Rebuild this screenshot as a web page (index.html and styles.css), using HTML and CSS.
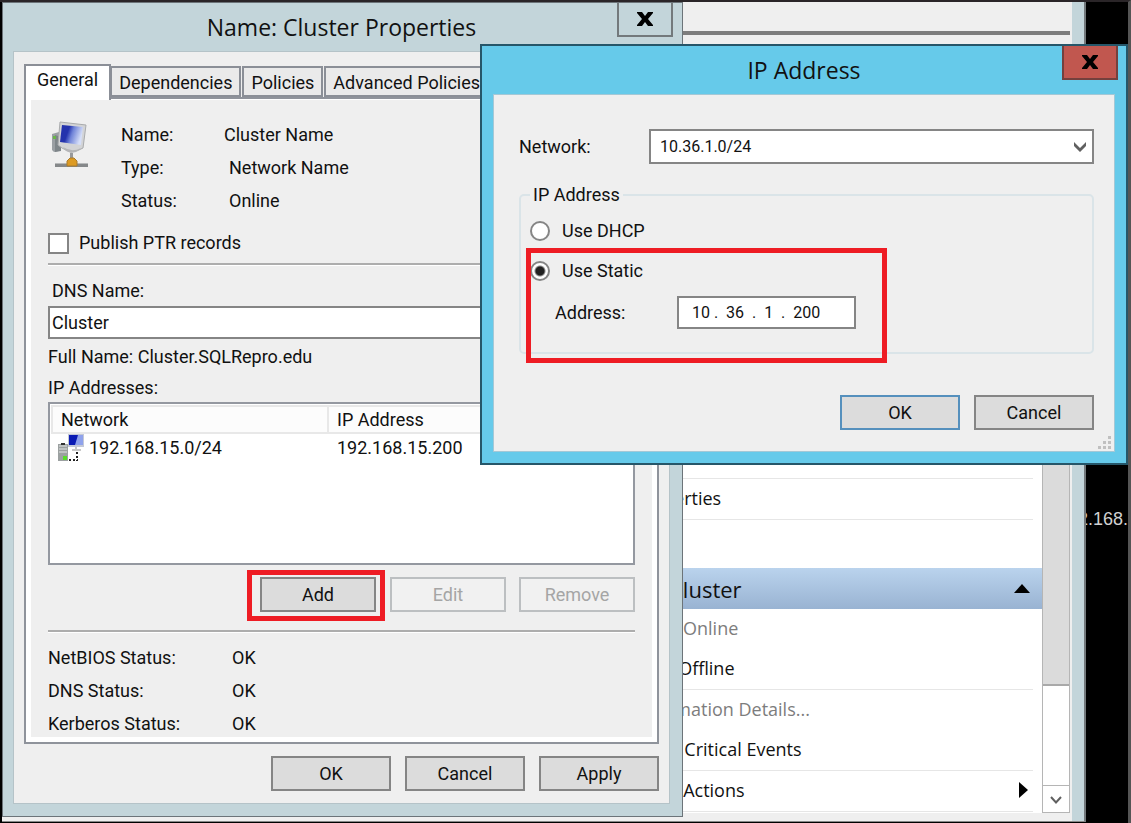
FILE: index.html
```html
<!DOCTYPE html>
<html lang="en">
<head>
    <meta charset="UTF-8">
    <meta name="viewport" content="width=device-width, initial-scale=1.0">
    <title>Name: Cluster Properties</title>
    <link rel="stylesheet" href="styles.css">
</head>
<body>
    <div class="desktop">
        <p class="console">192.168.</p>

        <!-- Failover Cluster Manager, behind the dialogs -->
        <div class="manager">
            <div class="toolbar"></div>
            <div class="pane">
                <div class="actions">
                    <a class="action line-top line" href="#">Properties</a>
                    <div class="actions-header">
                        <span>Cluster</span>
                        <svg width="16" height="9" viewBox="0 0 16 9"><path d="M0 9L8 0L16 9Z"/></svg>
                    </div>
                    <a class="action off" href="#">Bring Online</a>
                    <a class="action line" href="#">Take Offline</a>
                    <a class="action off" href="#">Information Details...</a>
                    <a class="action line" href="#">Show Critical Events</a>
                    <a class="action line" href="#">More Actions
                        <svg width="9" height="16" viewBox="0 0 9 16"><path d="M0 0L9 8L0 16Z"/></svg>
                    </a>
                </div>
                <div class="scrollbar">
                    <div class="thumb"></div>
                    <button class="scroll-down" aria-label="Scroll down">
                        <svg width="14" height="10" viewBox="0 0 14 10"><path d="M2 2L7 7.500L12 2" fill="none" stroke="#606060" stroke-width="2"/></svg>
                    </button>
                </div>
            </div>
        </div>

        <!-- Cluster properties window -->
        <div class="window properties">
            <div class="titlebar">
                <h1>Name: Cluster Properties</h1>
                <button class="close" aria-label="Close">
                    <svg width="16" height="14" viewBox="0 0 16 14"><path d="M0 0H5L8 4L11 0H16V1L11 7L16 13V14H11L8 10L5 14H0V13L5 7L0 1Z"/></svg>
                </button>
            </div>
            <div class="client">
                <div class="tabs">
                    <button class="tab active">General</button>
                    <button class="tab">Dependencies</button>
                    <button class="tab">Policies</button>
                    <button class="tab">Advanced Policies</button>
                </div>
                <div class="tab-panel">
                    <div class="summary">
                        <svg class="resource-icon" width="44" height="52" viewBox="0 0 44 52">
                            <defs>
                                <linearGradient id="screen" x1="0" y1="0" x2="1" y2="0.3">
                                    <stop offset="0.4" stop-color="#2433ad"/>
                                    <stop offset="0.6" stop-color="#6f83d8"/>
                                    <stop offset="1" stop-color="#d5def8"/>
                                </linearGradient>
                            </defs>
                            <path d="M4 14L11 12V31L6 32L4 30Z" fill="#9a9fa3"/>
                            <path d="M7 15L13 17V31L7 32Z" fill="#7e8589"/>
                            <rect x="5" y="16" width="3" height="3" fill="#69b54a"/>
                            <path d="M12 2L38 5L35 28Q24 35 14 28L10 25Z" fill="#d3d4d6" stroke="#a9abad"/>
                            <path d="M14 5L35 7L33 25L12 22Z" fill="url(#screen)"/>
                            <path d="M15 27Q24 33 33 28L28 32L23 33L18 31Z" fill="#b4b5b7"/>
                            <rect x="22" y="33" width="3" height="6" fill="#97999b"/>
                            <rect x="7" y="43" width="33" height="4" fill="#85888a"/>
                            <rect x="7" y="43" width="33" height="1" fill="#b7b9ba"/>
                            <path d="M19 46V41L22 38H26L29 41V46Z" fill="#dc9a22" stroke="#a87a2c"/>
                        </svg>
                        <dl class="details">
                            <dt>Name:</dt><dd>Cluster Name</dd>
                            <dt>Type:</dt><dd class="indent">Network Name</dd>
                            <dt>Status:</dt><dd class="indent">Online</dd>
                        </dl>
                    </div>
                    <label class="check"><input type="checkbox"> Publish PTR records</label>
                    <hr>
                    <label class="dns-label" for="dns-name">DNS Name:</label>
                    <input class="text-box" type="text" id="dns-name" value="Cluster">
                    <p class="full-name">Full Name: Cluster.SQLRepro.edu</p>
                    <p class="list-label">IP Addresses:</p>
                    <div class="list">
                        <table>
                            <thead>
                                <tr><th class="col-network">Network</th><th>IP Address</th></tr>
                            </thead>
                            <tbody>
                                <tr>
                                    <td>
                                        <div class="network">
                                            <svg width="28" height="28" viewBox="0 0 28 28">
                                                <rect x="1" y="10" width="10" height="17" fill="#9ca1a1"/>
                                                <path d="M2 12H10M2 15H10M2 18H10" stroke="#e2e4e4"/>
                                                <path d="M4 10H8" stroke="#333" stroke-width="2"/>
                                                <rect x="6" y="22" width="4" height="4" fill="#58dc2a"/>
                                                <rect x="11" y="0" width="16" height="13" fill="#c3c8d6"/>
                                                <rect x="12" y="1" width="14" height="10" fill="#8fa2ec"/>
                                                <path d="M12 1H21L18 11H12Z" fill="#0b1bb4"/>
                                                <path d="M19 13V15M15 16H24" stroke="#c8c8c8" stroke-width="2"/>
                                                <path d="M20 18V27M12 26H21" fill="none" stroke="#222" stroke-width="2" stroke-dasharray="2 2"/>
                                            </svg>
                                            192.168.15.0/24
                                        </div>
                                    </td>
                                    <td class="col-ip">192.168.15.200</td>
                                </tr>
                            </tbody>
                        </table>
                    </div>
                    <div class="buttons list-buttons">
                        <span class="marked"><button class="btn">Add</button></span>
                        <button class="btn" disabled>Edit</button>
                        <button class="btn" disabled>Remove</button>
                    </div>
                    <hr>
                    <dl class="statuses">
                        <dt>NetBIOS Status:</dt><dd>OK</dd>
                        <dt>DNS Status:</dt><dd>OK</dd>
                        <dt>Kerberos Status:</dt><dd>OK</dd>
                    </dl>
                </div>
                <div class="buttons footer">
                    <button class="btn">OK</button>
                    <button class="btn">Cancel</button>
                    <button class="btn">Apply</button>
                </div>
            </div>
        </div>

        <!-- IP address dialog -->
        <div class="window ip-dialog">
            <div class="titlebar">
                <h2>IP Address</h2>
                <button class="close" aria-label="Close">
                    <svg width="16" height="14" viewBox="0 0 16 14"><path d="M0 0H5L8 4L11 0H16V1L11 7L16 13V14H11L8 10L5 14H0V13L5 7L0 1Z"/></svg>
                </button>
            </div>
            <div class="client">
                <div class="network-row">
                    <label for="network">Network:</label>
                    <div class="select-box">
                        <select id="network">
                            <option>10.36.1.0/24</option>
                        </select>
                        <svg width="14" height="12" viewBox="0 0 14 12"><path d="M1 1L7 7L13 1V5L7 11L1 5Z" fill="#606060"/></svg>
                    </div>
                </div>
                <fieldset>
                    <legend>IP Address</legend>
                    <label class="radio"><input type="radio" name="mode"> Use DHCP</label>
                    <label class="radio"><input type="radio" name="mode" checked> Use Static</label>
                    <div class="address-row">
                        <label for="address">Address:</label>
                        <input class="text-box" type="text" id="address" value="10 .  36  .  1  .  200">
                    </div>
                    <div class="mark"></div>
                </fieldset>
                <div class="buttons footer">
                    <button class="btn default">OK</button>
                    <button class="btn">Cancel</button>
                </div>
                <svg class="grip" width="14" height="14" viewBox="0 0 14 14"><path d="M10 0h3v3h-3zM5 5h3v3h-3zM10 5h3v3h-3zM0 10h3v3h-3zM5 10h3v3h-3zM10 10h3v3h-3z" fill="#c0c0c0"/></svg>
            </div>
        </div>
    </div>
</body>
</html>
```
FILE: styles.css
```css
* {
    box-sizing: border-box;
}
body {
    margin: 0;
    background-color: #000;
    color: #111;
    font-family: Roboto, "Liberation Sans", sans-serif;
    font-size: 18px;
    line-height: 22px;
}
h1, h2, p, dl, dd, fieldset {
    margin: 0;
    padding: 0;
}
h1, h2 {
    font-family: "Open Sans", "Noto Sans", sans-serif;
    font-size: 23px;
    font-weight: normal;
    line-height: 30px;
}
button, input, select {
    font: inherit;
    color: inherit;
}
hr {
    width: 100%;
    height: 3px;
    margin: 0;
    border: none;
    border-top: 2px solid #adadad;
    border-bottom: 1px solid #fff;
}

/* Desktop */
.desktop {
    position: relative;
    min-height: 100vh;
    overflow: hidden;
    border-top: 2px solid #2a2528;
    border-right: 3px solid #555;
}
.console {
    position: absolute;
    top: 506px;
    right: 0;
    color: #d0d0d0;
    font-family: "Liberation Sans", sans-serif;
}

/* Manager window */
.manager {
    position: absolute;
    top: 0;
    bottom: 1px;
    left: 2px;
    right: 42px;
    display: flex;
    flex-direction: column;
    padding-bottom: 8px;
    border-right: 2px solid #73797c;
    border-bottom: 1px solid #888;
    background: linear-gradient(to left, #c3d5da 12px, #efefef 12px);
}
.toolbar {
    height: 33px;
    margin-right: 14px;
    border-bottom: 4px solid #7d7d7d;
}
.pane {
    flex: 1;
    display: flex;
    margin: 12px 14px 0 598px;
    background-color: #fff;
}
.actions {
    flex: 1;
    display: flex;
    flex-direction: column;
    justify-content: flex-end;
    padding-bottom: 1px;
    font-family: "Open Sans", "Noto Sans", sans-serif;
}
.action {
    display: flex;
    align-items: center;
    justify-content: space-between;
    height: 40px;
    margin-right: 9px;
    margin-left: 34px;
    padding: 0 5px 2px 0;
    color: #111;
    text-decoration: none;
}
.action.off {
    color: #7d7d7d;
}
.line {
    height: 41px;
    border-bottom: 1px solid #e6e6e6;
}
.line-top {
    height: 42px;
    border-top: 1px solid #e6e6e6;
}
.actions-header {
    display: flex;
    align-items: center;
    justify-content: space-between;
    height: 41px;
    margin-top: 48px;
    padding: 0 12px 0 69px;
    background: linear-gradient(#bad3ed, #99b3d2);
    font-size: 22px;
}
.scrollbar {
    display: flex;
    flex-direction: column;
    justify-content: space-between;
    width: 28px;
    border: 1px solid #b5b5b5;
    background-color: #fff;
}
.thumb {
    height: 638px;
    border-bottom: 2px solid #a9a9a9;
    background-color: #dbdbdb;
}
.scroll-down {
    height: 27px;
    padding: 0;
    border: none;
    border-top: 1px solid #b5b5b5;
    background-color: #fff;
}

/* Windows */
.window {
    position: absolute;
    padding: 0 12px 12px 10px;
    border: 1px solid #6c7479;
    background-color: #c3d5da;
}
.titlebar {
    position: relative;
    display: flex;
    align-items: center;
    justify-content: center;
    height: 48px;
}
.close {
    position: absolute;
    top: 0;
    right: -3px;
    display: flex;
    align-items: center;
    justify-content: center;
    width: 56px;
    height: 34px;
    padding: 0;
    border: 2px solid #73797c;
    border-top: none;
    background: none;
}
.client {
    background-color: #efefef;
    border: 1px solid #b5c3c8;
}
.btn {
    width: 120px;
    height: 35px;
    padding: 0;
    border: 2px solid #858585;
    background-color: #dcdcdc;
}
.btn:disabled {
    border-color: #bcbfc1;
    background-color: #f1f1f1;
    color: #a5a5a5;
}
.btn.default {
    border-color: #5590bd;
}
.buttons {
    display: flex;
    justify-content: flex-end;
    gap: 14px;
}
.text-box {
    height: 33px;
    border: 2px solid #858585;
    background-color: #fff;
}

/* Properties */
.properties {
    top: 0;
    left: 2px;
    right: 445px;
}
.client {
    padding: 12px 10px;
}
.tabs {
    display: flex;
    align-items: flex-end;
}
.tab {
    height: 31px;
    margin-right: 1px;
    padding: 2px 7px 0 7px;
    border: 2px solid #8b8f97;
    background-color: #eaeaea;
    white-space: nowrap;
}
.tab.active {
    position: relative;
    height: 36px;
    margin: 0 -1px -3px 0;
    padding: 0 11px 6px 11px;
    border-bottom: none;
    background-color: #fff;
}
.tab-panel {
    padding: 14px 22px 2px 22px;
    border: 2px solid #8f939b;
    box-shadow: inset 5px 0 #fff, inset -5px -5px #fff, inset 0 1px #fff;
}
.summary {
    display: flex;
    gap: 29px;
    padding-top: 5px;
}
.resource-icon {
    margin-top: 2px;
}
.details, .statuses {
    display: grid;
    grid-template-columns: 103px 1fr;
    line-height: 33px;
}
.indent {
    padding-left: 5px;
}
.check {
    display: flex;
    align-items: center;
    gap: 10px;
    margin: 15px 0 9px 0;
}
.check input {
    appearance: none;
    width: 21px;
    height: 21px;
    margin: 0;
    border: 2px solid #858585;
    background-color: #fff;
}
.dns-label {
    display: block;
    margin: 14px 0 4px 4px;
}
#dns-name {
    display: block;
    width: 100%;
    padding: 0 2px;
}
.full-name {
    margin-top: 7px;
}
.list-label {
    margin: 9px 0 3px 0;
}
.list {
    height: 163px;
    padding: 1px;
    border: 2px solid #9498a0;
    background-color: #fff;
}
.list table {
    width: 100%;
    border-collapse: collapse;
}
.list th {
    height: 27px;
    padding: 0 8px;
    border: 2px solid #e8e8e8;
    background-color: #fcfcfc;
    font-weight: normal;
    text-align: left;
}
.list td {
    padding: 0 5px;
}
.list .col-network {
    width: 276px;
}
.list .col-ip {
    padding-left: 9px;
}
.network {
    display: flex;
    align-items: center;
    gap: 4px;
}
.list-buttons {
    margin: 12px 0 18px 0;
}
.list-buttons .btn {
    width: 116px;
}
.list-buttons .btn:disabled {
    margin-right: -1px;
}
.list-buttons .btn:last-child {
    margin-right: 0;
}
.marked {
    position: relative;
}
.marked::after {
    content: "";
    position: absolute;
    inset: -7px -9px -9px -13px;
    border: 5px solid #ee1c24;
    pointer-events: none;
}
.statuses {
    grid-template-columns: 184px 1fr;
    padding-top: 8px;
}
.properties .footer {
    margin-top: 12px;
}

/* IP address dialog */
.ip-dialog {
    top: 42px;
    left: 480px;
    right: 0;
    padding: 0 11px 11px 11px;
    border: 2px solid #265669;
    background-color: #66caea;
}
.ip-dialog .client {
    position: relative;
    padding: 34px 20px 21px 25px;
    border-color: #a4c8d6;
}
.ip-dialog .close {
    border-color: #75403d;
    background-color: #c1574f;
}
.network-row {
    display: grid;
    grid-template-columns: 130px 1fr;
    align-items: center;
}
.select-box {
    position: relative;
}
.select-box select {
    appearance: none;
    display: block;
    width: 100%;
    height: 35px;
    padding: 0 9px;
    border: 2px solid #858585;
    border-radius: 0;
    background-color: #fff;
    font-size: 16px;
}
.select-box svg {
    position: absolute;
    top: 12px;
    right: 7px;
    pointer-events: none;
}
fieldset {
    position: relative;
    min-width: 0;
    margin-top: 20px;
    padding: 14px 9px 23px 9px;
    border: 2px solid #dae4e8;
    border-radius: 5px;
}
legend {
    padding: 0 3px;
}
.radio {
    display: flex;
    align-items: center;
    gap: 12px;
    margin-bottom: 18px;
}
.radio input {
    appearance: none;
    width: 20px;
    height: 20px;
    margin: 0;
    border: 2px solid #858585;
    border-radius: 50%;
    background-color: #fff;
}
.radio input:checked {
    background: radial-gradient(#222 0 4px, #fff 6px);
}
.radio + .radio {
    margin-bottom: 14px;
}
.address-row {
    display: grid;
    grid-template-columns: 122px 179px;
    align-items: center;
    padding-left: 25px;
}
#address {
    padding: 0 13px;
    font-size: 16px;
}
.mark {
    position: absolute;
    top: 42px;
    left: 5px;
    width: 361px;
    height: 115px;
    border: 5px solid #ee1c24;
    pointer-events: none;
}
.ip-dialog .footer {
    margin-top: 41px;
}
.grip {
    position: absolute;
    right: 2px;
    bottom: 1px;
}
```
